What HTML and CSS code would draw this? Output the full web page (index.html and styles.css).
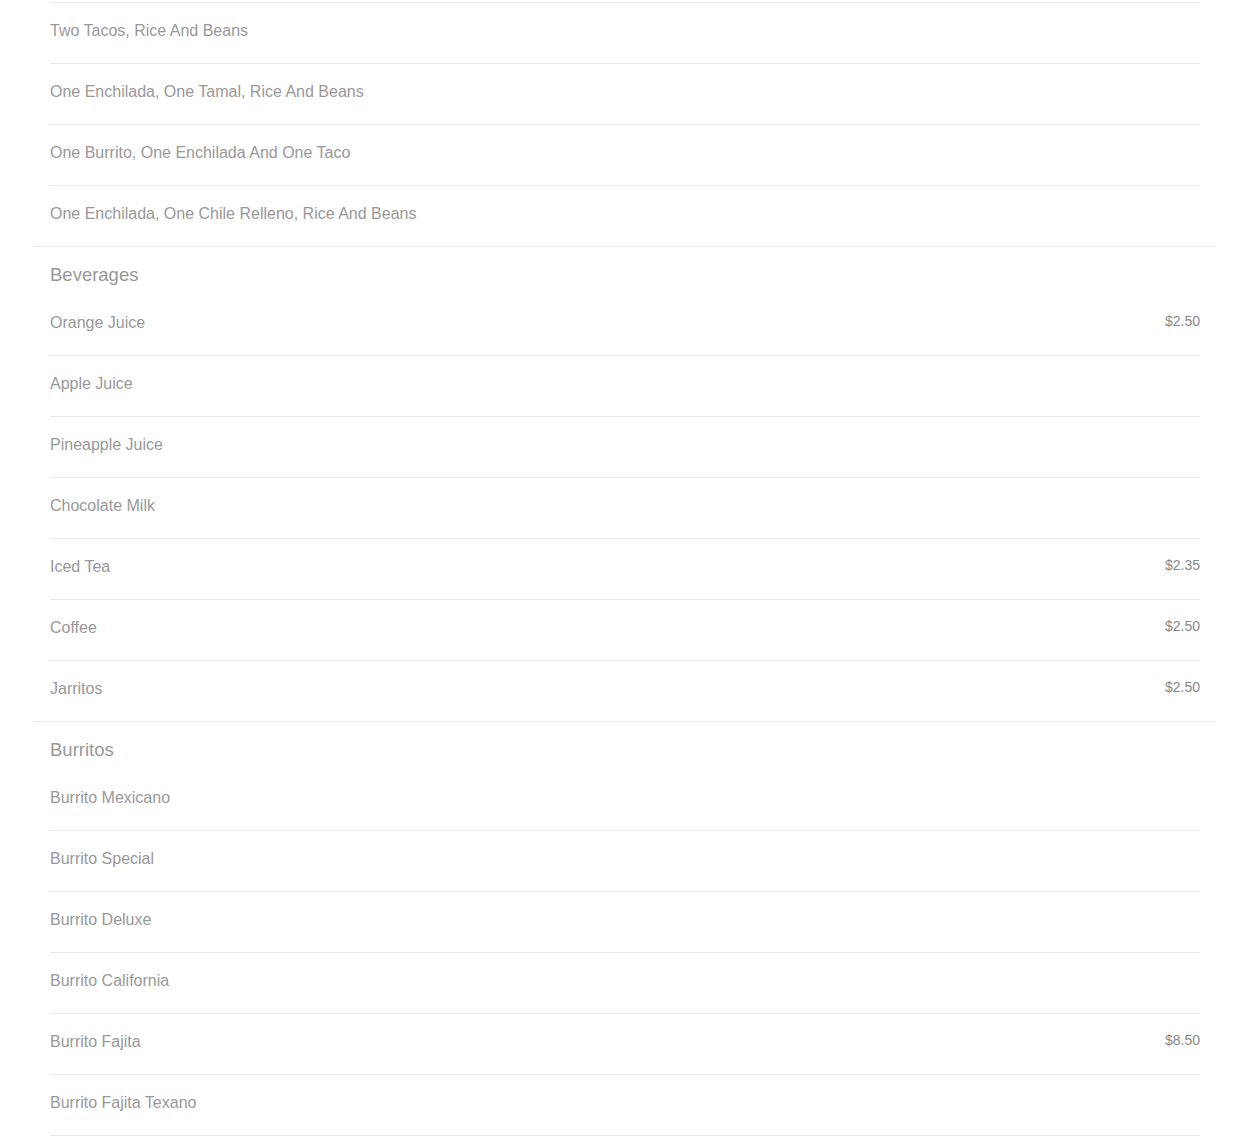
FILE: index.html
```html
<!DOCTYPE html>
<html lang="en">
<head>
<meta charset="UTF-8">
<meta name="viewport" content="width=device-width, initial-scale=1.0">
<title>Menu</title>
<link rel="stylesheet" href="styles.css">
</head>
<body>
<div class="menu">

    <!-- tail of the combination plates, list is scrolled -->
    <div class="section">
        <ul class="items continued">
            <li class="item"><span class="name">Two Tacos, Rice And Beans</span></li>
            <li class="item"><span class="name">One Enchilada, One Tamal, Rice And Beans</span></li>
            <li class="item"><span class="name">One Burrito, One Enchilada And One Taco</span></li>
            <li class="item"><span class="name">One Enchilada, One Chile Relleno, Rice And Beans</span></li>
        </ul>
    </div>

    <div class="section">
        <h3 class="stitle">Beverages</h3>
        <ul class="items">
            <li class="item"><span class="name">Orange Juice</span><span class="price">$2.50</span></li>
            <li class="item"><span class="name">Apple Juice</span></li>
            <li class="item"><span class="name">Pineapple Juice</span></li>
            <li class="item"><span class="name">Chocolate Milk</span></li>
            <li class="item"><span class="name">Iced Tea</span><span class="price">$2.35</span></li>
            <li class="item"><span class="name">Coffee</span><span class="price">$2.50</span></li>
            <li class="item"><span class="name">Jarritos</span><span class="price">$2.50</span></li>
        </ul>
    </div>

    <div class="section open">
        <h3 class="stitle">Burritos</h3>
        <ul class="items">
            <li class="item"><span class="name">Burrito Mexicano</span></li>
            <li class="item"><span class="name">Burrito Special</span></li>
            <li class="item"><span class="name">Burrito Deluxe</span></li>
            <li class="item"><span class="name">Burrito California</span></li>
            <li class="item"><span class="name">Burrito Fajita</span><span class="price">$8.50</span></li>
            <li class="item"><span class="name">Burrito Fajita Texano</span></li>
        </ul>
    </div>

</div>
</body>
</html>
```

FILE: styles.css
```css
body{
    margin: 0;
    font-family: "Liberation Sans", Arial, sans-serif;
    color: #999;
    background-color: #fff;
}
.menu{
    padding: 2px 34px 0 33px;
}
.section{
    padding: 0 16px 0 17px;
    border-bottom: 1px solid #e8e8e8;
}
.section.open{
    border-bottom: none;
}
.stitle{
    margin: 0;
    padding: 17px 0 9px 0;
    font-size: 18.5px;
    font-weight: normal;
    line-height: 22px;
    color: #999;
}
.items{
    list-style: none;
    margin: 0;
    padding: 0;
}
.items.continued{
    border-top: 1px solid #e8e8e8;
}
.item{
    display: flex;
    justify-content: space-between;
    align-items: flex-start;
    height: 18px;
    padding: 19px 0 23px 0;
    border-bottom: 1px solid #e8e8e8;
}
.item:last-child{
    border-bottom: none;
}
.section.open .item:last-child{
    border-bottom: 1px solid #e8e8e8;
}
.name{
    font-size: 16px;
    line-height: 18px;
}
.price{
    font-size: 14px;
    line-height: 14px;
    color: #888;
}
```
